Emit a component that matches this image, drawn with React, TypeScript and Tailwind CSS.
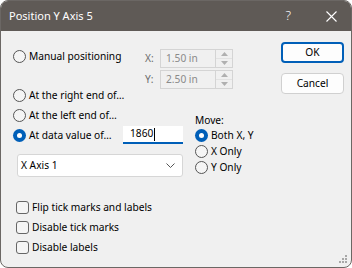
import React from 'react';

const font = { fontFamily: '"Noto Sans", "Open Sans", sans-serif' };

function Radio({ checked = false, label }: { checked?: boolean; label: string }) {
    return (
        <div className="flex items-center h-4 leading-4 whitespace-nowrap">
            {checked ? (
                <span className="w-[13px] h-[13px] rounded-full bg-[#005fb8] flex items-center justify-center shrink-0">
                    <span className="w-[5px] h-[5px] rounded-full bg-white" />
                </span>
            ) : (
                <span className="w-[13px] h-[13px] rounded-full border border-[#555] bg-[#f5f5f5] shrink-0" />
            )}
            <span className="ml-[3px]">{label}</span>
        </div>
    );
}

function Checkbox({ label }: { label: string }) {
    return (
        <div className="flex items-center h-4 leading-4 whitespace-nowrap">
            <span className="w-[13px] h-[13px] rounded-[3px] border border-[#666] bg-[#f5f5f5] shrink-0" />
            <span className="ml-[3px]">{label}</span>
        </div>
    );
}

function Spin({ label, value }: { label: string; value: string }) {
    return (
        <div className="flex items-center h-[19px]">
            <span className="w-[15px] text-[#6d6d6d]">{label}</span>
            <div className="flex h-full w-[56px] border border-[#d4d4d4] bg-[#f0f0f0] items-center pl-[5px] text-[#8a8a8a]">
                {value}
            </div>
            <div className="flex flex-col h-full w-[17px] border border-l-0 border-[#d4d4d4] bg-[#f0f0f0]">
                <div className="flex-1 flex items-center justify-center border-b border-[#e2e2e2]">
                    <svg width="7" height="4" viewBox="0 0 7 4"><path d="M0 4 L3.5 0 L7 4Z" fill="#b0b0b0" /></svg>
                </div>
                <div className="flex-1 flex items-center justify-center">
                    <svg width="7" height="4" viewBox="0 0 7 4"><path d="M0 0 L3.5 4 L7 0Z" fill="#b0b0b0" /></svg>
                </div>
            </div>
        </div>
    );
}

export default function App() {
    return (
        <div className="w-[352px] h-[268px] bg-white text-[10.2px] text-black" style={font}>
            <div className="w-full h-full flex flex-col rounded-[8px] overflow-hidden border border-[#6b6764] bg-[#f0f0f0]">
                {/* Title bar */}
                <div className="h-[30px] bg-[#5f5a56] flex items-center pl-[8px] pr-[14px] text-white shrink-0">
                    <span className="text-[11px]">Position Y Axis 5</span>
                    <span className="ml-auto text-[13px] font-light mr-[35px]">?</span>
                    <svg width="11" height="11" viewBox="0 0 11 11">
                        <path d="M0.5 0.5 L10.5 10.5 M10.5 0.5 L0.5 10.5" stroke="white" strokeWidth="1.1" />
                    </svg>
                </div>

                {/* Body */}
                <div className="flex flex-1 relative">
                    <div className="pl-[12px] pt-[17px] w-[260px]">
                        {/* Manual + XY */}
                        <div className="flex items-start">
                            <div className="w-[132px]">
                                <Radio label="Manual positioning" />
                            </div>
                            <div className="flex flex-col gap-[2px] mt-[1px]">
                                <Spin label="X:" value="1.50 in" />
                                <Spin label="Y:" value="2.50 in" />
                            </div>
                        </div>
                        <div className="-mt-[2px]">
                            <Radio label="At the right end of…" />
                        </div>

                        {/* Left end, data value, dropdown + Move group */}
                        <div className="flex mt-[4px]">
                            <div className="w-[171px]">
                                <Radio label="At the left end of…" />
                                <div className="flex items-center mt-[3px] h-[18px]">
                                    <div className="w-[110px]">
                                        <Radio checked label="At data value of…" />
                                    </div>
                                    <div className="w-[60px] h-[18px] bg-white border-b-2 border-[#005fb8] flex items-center pl-[7px]">
                                        1860
                                        <span className="w-px h-[13px] bg-black ml-[1px]" />
                                    </div>
                                </div>
                                <div className="mt-[10px] ml-[4px] w-[166px] h-[23px] bg-white border border-[#d6d6d6] rounded-[3px] flex items-center pl-[3px] pr-[7px]">
                                    <span>X Axis 1</span>
                                    <svg className="ml-auto" width="9" height="5" viewBox="0 0 9 5">
                                        <path d="M0.5 0.5 L4.5 4.5 L8.5 0.5" stroke="#555" strokeWidth="1" fill="none" />
                                    </svg>
                                </div>
                            </div>
                            <div className="ml-[11px] mt-[7px]">
                                <div className="leading-[13px] h-[13px]">Move:</div>
                                <Radio checked label="Both X, Y" />
                                <Radio label="X Only" />
                                <Radio label="Y Only" />
                            </div>
                        </div>

                        {/* Checkboxes */}
                        <div className="ml-[3px] mt-[22px] flex flex-col gap-[4px]">
                            <Checkbox label="Flip tick marks and labels" />
                            <Checkbox label="Disable tick marks" />
                            <Checkbox label="Disable labels" />
                        </div>
                    </div>

                    {/* Buttons */}
                    <div className="ml-[20px] pt-[11px] flex flex-col gap-[10px]">
                        <button className="w-[63px] h-[21px] bg-[#fdfdfd] border-2 border-[#005fb8] rounded-[4px] leading-none">OK</button>
                        <button className="w-[63px] h-[21px] bg-[#fdfdfd] border border-[#d0d0d0] rounded-[4px] leading-none">Cancel</button>
                    </div>

                    {/* resize grip */}
                    <svg className="absolute right-[3px] bottom-[3px]" width="9" height="9" viewBox="0 0 9 9">
                        <rect x="6" y="0" width="2" height="2" fill="#a8a8a8" />
                        <rect x="3" y="3" width="2" height="2" fill="#a8a8a8" />
                        <rect x="6" y="3" width="2" height="2" fill="#a8a8a8" />
                        <rect x="0" y="6" width="2" height="2" fill="#a8a8a8" />
                        <rect x="3" y="6" width="2" height="2" fill="#a8a8a8" />
                        <rect x="6" y="6" width="2" height="2" fill="#a8a8a8" />
                    </svg>
                </div>
            </div>
        </div>
    );
}
